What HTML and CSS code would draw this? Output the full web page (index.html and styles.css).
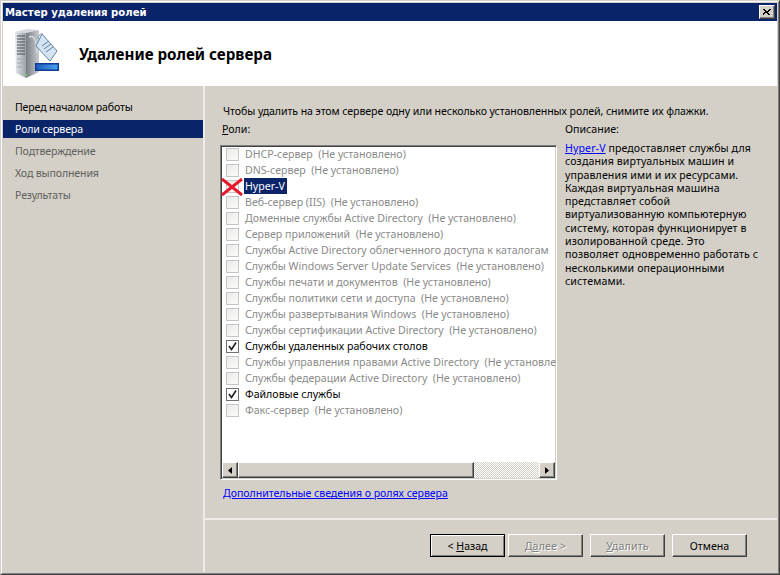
FILE: index.html
```html
<!DOCTYPE html>
<html lang="ru">
<head>
<meta charset="utf-8">
<title>Мастер удаления ролей</title>
<link rel="stylesheet" href="styles.css">
</head>
<body>
<div class="window">
  <div class="window-inner">
    <div class="titlebar">
      <span class="title-text">Мастер удаления ролей</span>
      <button class="close" type="button" aria-label="Закрыть">
        <svg width="8" height="7" viewBox="0 0 8 7"><path d="M0 0h2v1h1v1h2v-1h1v-1h2v1h-1v1h-1v1h-1v1h1v1h1v1h-2v-1h-1v-1h-2v1h-1v1h-2v-1h1v-1h1v-1h1v-1h-1v-1h-1z" fill="#000"/></svg>
      </button>
    </div>
    <header class="header">
      <svg class="logo" width="46" height="50" viewBox="0 0 46 50">
        <defs>
          <linearGradient id="front" x1="0" x2="1" y1="0" y2="0"><stop offset="0" stop-color="#e6e9ec"/><stop offset="1" stop-color="#9aa1a9"/></linearGradient>
          <linearGradient id="side" x1="0" x2="1" y1="0" y2="0"><stop offset="0" stop-color="#767d85"/><stop offset="1" stop-color="#c9ccd0"/></linearGradient>
          <linearGradient id="bar" x1="0" x2="1" y1="0" y2="0"><stop offset="0" stop-color="#1f5fc0"/><stop offset="1" stop-color="#4aa0ee"/></linearGradient>
        </defs>
        <path d="M1 3 L13 0 L25 1 L12 4 Z" fill="#d5d8dc"/>
        <path d="M1 3 L12 4 L12 49 L2 44 Z" fill="url(#front)"/>
        <path d="M12 4 L25 1 L25 43 L12 49 Z" fill="url(#side)"/>
        <path d="M15 8 Q21 6 22 14 L23 24" fill="none" stroke="#d8dadd" stroke-width="1.5"/>
        <path d="M3 7h8M3 10h8M3 13h8M3 16h8M3 19h8M3 22h8M3 25h8" stroke="#474d54" stroke-width="1.2"/>
        <path d="M3 30h8M3 34h8M3 38h8" stroke="#a4a9af" stroke-width="1"/>
        <rect x="11" y="45" width="2" height="2" fill="#6fd04a"/>
        <path d="M22 17 L28 5 L43 22 L36 32 Z" fill="#d4e4f2" stroke="#5f86ac"/>
        <path d="M28 17 L35 12 M30 20 L37 15 M32 23 L39 18" stroke="#5d7f9f" stroke-width="1"/>
        <path d="M24 10 q1 -6 5 -5" fill="none" stroke="#8a96a2"/>
        <rect x="21" y="34" width="24" height="8" fill="#0f3c92"/>
        <rect x="22.500" y="35.500" width="21" height="5" fill="url(#bar)"/>
      </svg>
      <h1 class="header-title">Удаление ролей сервера</h1>
    </header>
    <div class="content">
      <nav class="sidebar">
        <div class="step">Перед началом работы</div>
        <div class="step step-current">Роли сервера</div>
        <div class="step step-pending">Подтверждение</div>
        <div class="step step-pending">Ход выполнения</div>
        <div class="step step-pending">Результаты</div>
      </nav>
      <main class="main">
        <div class="panel">
          <p class="intro">Чтобы удалить на этом сервере одну или несколько установленных ролей, снимите их флажки.</p>
          <div class="columns">
            <div class="roles">
              <div class="roles-label"><u>Р</u>оли:</div>
              <div class="listbox">
                <div class="rows">
                  <div class="row"><span class="check"></span><span class="role">DHCP-сервер  (Не установлено)</span></div>
                  <div class="row"><span class="check"></span><span class="role">DNS-сервер  (Не установлено)</span></div>
                  <div class="row row-selected"><span class="check"></span><span class="role">Hyper-V</span>
                    <svg class="cross" width="22" height="18" viewBox="0 0 22 18"><path d="M1 1 L21 17 M21 1 L1 17" stroke="#e8182c" stroke-width="3" fill="none"/></svg>
                  </div>
                  <div class="row"><span class="check"></span><span class="role">Веб-сервер (IIS)  (Не установлено)</span></div>
                  <div class="row"><span class="check"></span><span class="role">Доменные службы Active Directory  (Не установлено)</span></div>
                  <div class="row"><span class="check"></span><span class="role">Сервер приложений  (Не установлено)</span></div>
                  <div class="row"><span class="check"></span><span class="role">Службы Active Directory облегченного доступа к каталогам</span></div>
                  <div class="row"><span class="check"></span><span class="role">Службы Windows Server Update Services  (Не установлено)</span></div>
                  <div class="row"><span class="check"></span><span class="role">Службы печати и документов  (Не установлено)</span></div>
                  <div class="row"><span class="check"></span><span class="role">Службы политики сети и доступа  (Не установлено)</span></div>
                  <div class="row"><span class="check"></span><span class="role">Службы развертывания Windows  (Не установлено)</span></div>
                  <div class="row"><span class="check"></span><span class="role">Службы сертификации Active Directory  (Не установлено)</span></div>
                  <div class="row row-on"><span class="check"><svg width="9" height="9" viewBox="0 0 9 9"><path d="M1 4 L3.5 7.5 L8 0.5" fill="none" stroke="#222" stroke-width="1.6"/></svg></span><span class="role">Службы удаленных рабочих столов</span></div>
                  <div class="row"><span class="check"></span><span class="role">Службы управления правами Active Directory  (Не установлено)</span></div>
                  <div class="row"><span class="check"></span><span class="role">Службы федерации Active Directory  (Не установлено)</span></div>
                  <div class="row row-on"><span class="check"><svg width="9" height="9" viewBox="0 0 9 9"><path d="M1 4 L3.5 7.5 L8 0.5" fill="none" stroke="#222" stroke-width="1.6"/></svg></span><span class="role">Файловые службы</span></div>
                  <div class="row"><span class="check"></span><span class="role">Факс-сервер  (Не установлено)</span></div>
                </div>
                <div class="scrollbar">
                  <div class="sb-btn"><svg width="4" height="7" viewBox="0 0 4 7"><path d="M4 0v7L0 3.500z" fill="#000"/></svg></div>
                  <div class="sb-thumb"></div>
                  <div class="sb-track"></div>
                  <div class="sb-btn"><svg width="4" height="7" viewBox="0 0 4 7"><path d="M0 0v7l4-3.500z" fill="#000"/></svg></div>
                </div>
              </div>
              <a class="more" href="#">Дополнительные сведения о ролях сервера</a>
            </div>
            <aside class="desc">
              <div class="desc-label">Описание:</div>
              <p class="desc-text"><a href="#">Hyper-V</a> предоставляет службы для<br>создания виртуальных машин и<br>управления ими и их ресурсами.<br>Каждая виртуальная машина<br>представляет собой<br>виртуализованную компьютерную<br>систему, которая функционирует в<br>изолированной среде. Это<br>позволяет одновременно работать с<br>несколькими операционными<br>системами.</p>
            </aside>
          </div>
        </div>
        <footer class="footer">
          <button class="btn btn-default" type="button">&lt; <u>Н</u>азад</button>
          <button class="btn btn-next" type="button" disabled>Д<u>а</u>лее &gt;</button>
          <button class="btn btn-del" type="button" disabled><u>У</u>далить</button>
          <button class="btn btn-cancel" type="button">Отмена</button>
        </footer>
      </main>
    </div>
  </div>
</div>
</body>
</html>
```

FILE: styles.css
```css
* { box-sizing: border-box; }
html, body { margin: 0; padding: 0; height: 100%; }
body {
  width: 780px;
  height: 575px;
  overflow: hidden;
  font-family: "Noto Sans", sans-serif;
  font-size: 10.6px;
  color: #000;
  background: #d4d0c8;
}
.window {
  width: 780px;
  height: 575px;
  border: 1px solid;
  border-color: #d4d0c8 #404040 #404040 #d4d0c8;
}
.window-inner {
  height: 100%;
  display: flex;
  flex-direction: column;
  padding: 1px;
  border: 1px solid;
  border-color: #fff #808080 #808080 #fff;
  background: #d4d0c8;
}
.titlebar {
  flex: none;
  height: 18px;
  display: flex;
  align-items: center;
  justify-content: space-between;
  padding: 0 2px;
  background: #0a246a;
  color: #fff;
  font-family: "DejaVu Sans", sans-serif;
  font-size: 10.1px;
  font-weight: bold;
}
.close {
  width: 16px;
  height: 14px;
  padding: 0;
  display: flex;
  align-items: center;
  justify-content: center;
  background: #d4d0c8;
  border: 1px solid;
  border-color: #fff #404040 #404040 #fff;
  box-shadow: inset -1px -1px 0 #808080;
}
.header {
  flex: none;
  height: 65px;
  display: flex;
  align-items: center;
  background: #fff;
}
.logo { margin-left: 11px; flex: none; }
.header-title {
  margin: 0 0 0 19px;
  font-size: 15.2px;
  font-weight: bold;
}
.content { flex: 1; display: flex; min-height: 0; }
.sidebar {
  flex: none;
  width: 200px;
  padding-top: 12px;
  display: flex;
  flex-direction: column;
  gap: 4px;
}
.step { height: 18px; line-height: 18px; padding-left: 12px; letter-spacing: -0.15px; }
.step-current { background: #0a246a; color: #fff; }
.step-pending { color: #605f5c; }
.main {
  flex: 1;
  min-width: 0;
  display: flex;
  flex-direction: column;
  border-left: 2px solid #eeece8;
}
.panel {
  flex: none;
  height: 434px;
  padding: 18px 0 0 18px;
  border-bottom: 2px solid #eeece8;
}
.intro { margin: 0; height: 14px; line-height: 14px; letter-spacing: -0.08px; }
.columns { display: flex; margin: 4px 0 0 -1px; }
.roles { flex: none; width: 337px; margin-left: -2px; }
.roles-label { height: 15px; line-height: 14px; padding-left: 2px; }
.listbox {
  margin-top: 8px;
  height: 335px;
  display: flex;
  flex-direction: column;
  border: 1px solid;
  border-color: #808080 #fff #fff #808080;
  background: #fff;
  box-shadow: inset 1px 1px 0 #404040, inset -1px -1px 0 #d4d0c8;
}
.rows { flex: 1; padding: 0 2px 0 5px; overflow: hidden; min-height: 0; }
.row {
  position: relative;
  height: 16px;
  display: flex;
  align-items: center;
  white-space: pre;
  color: #8a8a8a;
}
.row-on { color: #000; }
.check {
  flex: none;
  width: 13px;
  height: 13px;
  margin-right: 5px;
  display: flex;
  align-items: center;
  justify-content: center;
  border: 1px solid #c4c4c4;
  background: linear-gradient(135deg, #eceae6, #fbfbfa);
}
.row-on .check { border-color: #707070; background: #fff; }
.role { padding: 0 1px; line-height: 16px; }
.row-selected .role { background: #0a246a; color: #fff; padding: 0 2px 0 1px; }
.cross { position: absolute; left: -5px; top: 0; }
.scrollbar { flex: none; display: flex; height: 16px; margin: 0 1px 1px 1px; }
.sb-btn {
  flex: none;
  width: 16px;
  display: flex;
  align-items: center;
  justify-content: center;
  background: #d4d0c8;
  border: 1px solid;
  border-color: #fff #404040 #404040 #fff;
  box-shadow: inset -1px -1px 0 #808080;
}
.sb-thumb {
  flex: none;
  width: 236px;
  background: #d4d0c8;
  border: 1px solid;
  border-color: #fff #404040 #404040 #fff;
  box-shadow: inset -1px -1px 0 #808080;
}
.sb-track {
  flex: 1;
  background-color: #fff;
  background-image: conic-gradient(#d4d0c8 25%, #fff 0 50%, #d4d0c8 0 75%, #fff 0);
  background-size: 2px 2px;
}
.more { display: block; margin: 6px 0 0 3px; line-height: 14px; color: #0000ff; letter-spacing: -0.05px; }
.desc { flex: none; width: 210px; padding-left: 8px; }
.desc-label { height: 15px; line-height: 14px; }
.desc-text { margin: 5px 0 0; line-height: 13.3px; letter-spacing: 0.1px; }
.desc-text a { color: #0000ff; }
.footer {
  flex: 1;
  display: flex;
  align-items: flex-start;
  padding: 14px 0 0 225px;
}
.btn {
  width: 75px;
  height: 23px;
  padding: 0;
  font: inherit;
  color: #000;
  background: #d4d0c8;
  border: 1px solid;
  border-color: #fff #404040 #404040 #fff;
  box-shadow: inset -1px -1px 0 #808080;
}
.btn-default { border-color: #000; box-shadow: inset 1px 1px 0 #fff, inset -1px -1px 0 #808080; }
.btn:disabled { color: #808080; text-shadow: 1px 1px 0 #fff; letter-spacing: 0.2px; }
.btn-next { margin-left: 3px; }
.btn-del { margin-left: 7px; }
.btn-cancel { margin-left: 7px; }
```
